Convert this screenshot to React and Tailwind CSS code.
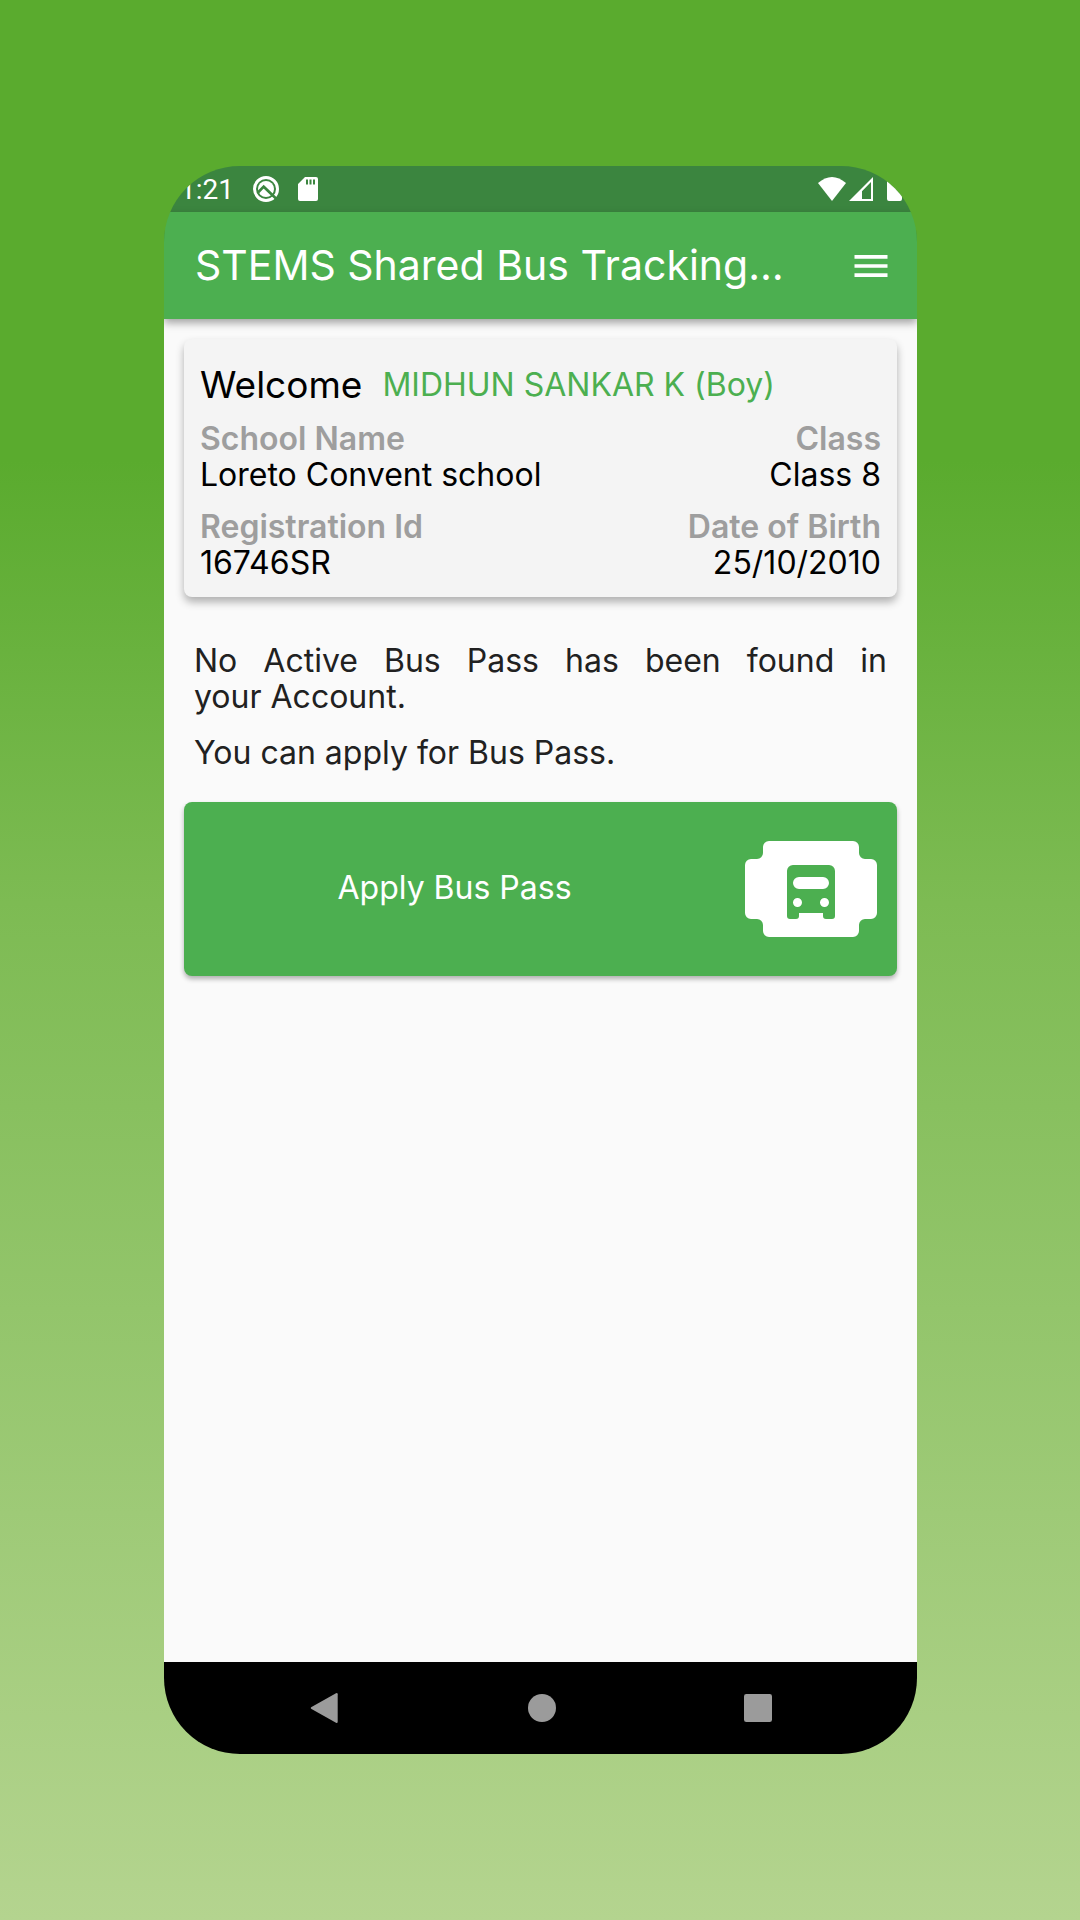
const Glyph = ({ children, className, viewBox = "0 0 24 24" }) => (
  <svg viewBox={viewBox} className={className} fill="currentColor" aria-hidden="true">{children}</svg>
);

function StatusBar() {
  return (
    <div className="flex h-[46px] shrink-0 items-center bg-[#3b853f] pl-4 pr-[15px] text-white">
      <time className="pt-0.5 font-[Roboto,sans-serif] text-[28px] leading-8">1:21</time>
      <Glyph className="ml-[18px] size-7" viewBox="0 0 28 28">
        <circle cx="14" cy="14" r="11.5" fill="none" stroke="currentColor" strokeWidth="3" />
        <circle cx="14" cy="14" r="8" />
        <path d="M6 17.500 11.700 11.700 24.500 24" fill="none" stroke="#3b853f" strokeWidth="2.6" />
      </Glyph>
      <Glyph className="ml-[18px] h-6 w-5" viewBox="0 0 20 24">
        <path fillRule="evenodd" d="M7 0h11a2 2 0 0 1 2 2v20a2 2 0 0 1-2 2H2a2 2 0 0 1-2-2V7l7-7Zm1 2.500v5h2v-5H8Zm3.500 0v5h2v-5h-2Zm3.500 0v5h2v-5h-2Z" />
      </Glyph>
      <Glyph className="ml-auto h-6 w-7" viewBox="0 0 28 24">
        <path d="M0 6Q14-6 28 6L14 24Z" />
      </Glyph>
      <Glyph className="ml-[3px] size-6">
        <path fillRule="evenodd" d="M0 24 24 0v24H0Zm13-2h9V5l-9 9.200V22Z" />
      </Glyph>
      <Glyph className="ml-[14px] h-6 w-[15px]" viewBox="0 0 15 24">
        <path d="M0 2.500h4V0h7v2.500h4V22a2 2 0 0 1-2 2H2a2 2 0 0 1-2-2Z" />
      </Glyph>
    </div>
  );
}

function Field({ label, value, end }) {
  return (
    <div className={end ? "text-right" : "text-left"}>
      <dt className="font-semibold text-[#9e9e9e]">{label}</dt>
      <dd className="text-black">{value}</dd>
    </div>
  );
}

export default function App() {
  return (
    <div className="min-h-screen bg-[linear-gradient(180deg,#5aab2e_0%,#5aab2e_24%,#7dbb53_47%,#b4d48f_100%)] pl-[164px] pr-[163px] py-[166px] font-[Inter,sans-serif]">
      <div className="flex min-h-[calc(100vh-332px)] flex-col overflow-hidden rounded-[76px]">
        <StatusBar />
        <header className="z-10 flex h-[107px] shrink-0 items-center justify-between bg-[#4caf50] pl-[31px] pr-6 text-white shadow-[0_4px_8px_rgba(0,0,0,0.35)]">
          <h1 className="whitespace-nowrap pb-0.5 text-[41px] leading-12">STEMS Shared Bus Tracking…</h1>
          <button type="button" aria-label="Open menu">
            <Glyph className="size-11">
              <path d="M3 18h18v-2H3v2zm0-5h18v-2H3v2zm0-7v2h18V6H3z" />
            </Glyph>
          </button>
        </header>
        <main className="flex grow flex-col bg-[#fafafa] px-5 pt-5 text-[32px] leading-9">
          <section className="rounded-lg bg-[#f4f4f4] px-4 pb-4 pt-[26px] shadow-[0_5px_8px_rgba(0,0,0,0.3)]">
            <h2 className="flex items-center gap-5 text-[#4caf50]">
              <span className="text-[37px] leading-10 text-black">Welcome</span>
              MIDHUN SANKAR K (Boy)
            </h2>
            <dl className="mt-4 grid grid-cols-[auto_auto] justify-between gap-y-4">
              <Field label="School Name" value="Loreto Convent school" />
              <Field label="Class" value="Class 8" end />
              <Field label="Registration Id" value="16746SR" />
              <Field label="Date of Birth" value="25/10/2010" end />
            </dl>
          </section>
          <div className="px-[10px] pt-[46px] text-[#212121]">
            <p className="text-justify">
              No Active Bus Pass has been found in <span className="whitespace-nowrap">your Account.</span>
            </p>
            <p className="mt-5">You can apply for Bus Pass.</p>
          </div>
          <button type="button" className="mt-[31px] flex h-[174px] items-center rounded-lg bg-[#4caf50] pr-5 text-white shadow-[0_3px_5px_rgba(0,0,0,0.3)]">
            <span className="grow pb-0.5 pr-5 text-center">Apply Bus Pass</span>
            <Glyph className="h-24 w-33" viewBox="0 0 132 96">
              <path fillRule="evenodd" d="M24 0h84a6 6 0 0 1 6 6v6a6 6 0 0 0 6 6h6a6 6 0 0 1 6 6v48a6 6 0 0 1-6 6h-6a6 6 0 0 0-6 6v6a6 6 0 0 1-6 6H24a6 6 0 0 1-6-6v-6a6 6 0 0 0-6-6H6a6 6 0 0 1-6-6V24a6 6 0 0 1 6-6h6a6 6 0 0 0 6-6V6a6 6 0 0 1 6-6ZM48 24a6 6 0 0 0-6 6v45a3 3 0 0 0 3 3h6a3 3 0 0 0 3-3v-3h24v3a3 3 0 0 0 3 3h6a3 3 0 0 0 3-3V30a6 6 0 0 0-6-6ZM54 36h24a6 6 0 0 1 0 12H54a6 6 0 0 1 0-12ZM52.500 57a4.500 4.500 0 1 1 0 9 4.500 4.500 0 0 1 0-9ZM79.500 57a4.500 4.500 0 1 1 0 9 4.500 4.500 0 0 1 0-9Z" />
            </Glyph>
          </button>
        </main>
        <nav aria-label="System navigation" className="flex h-[92px] shrink-0 items-center justify-center gap-[188px] bg-black text-[#9b9b9b]">
          <button type="button" aria-label="Back" className="pr-0.5">
            <Glyph className="h-8 w-7" viewBox="0 0 28 32">
              <path d="M26 1.200a1.200 1.200 0 0 1 1.700 1v27.600a1.200 1.200 0 0 1-1.700 1L1.500 17a1.200 1.200 0 0 1 0-2Z" />
            </Glyph>
          </button>
          <button type="button" aria-label="Home">
            <Glyph className="size-7"><circle cx="12" cy="12" r="12" /></Glyph>
          </button>
          <button type="button" aria-label="Recent apps">
            <Glyph className="size-7"><rect width="24" height="24" rx="2" /></Glyph>
          </button>
        </nav>
      </div>
    </div>
  );
}
